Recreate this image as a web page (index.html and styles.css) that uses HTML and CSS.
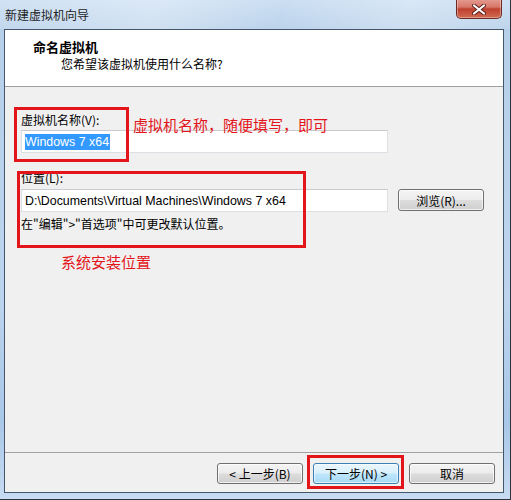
FILE: index.html
```html
<!DOCTYPE html>
<html lang="zh-CN">
<head>
<meta charset="utf-8">
<title>新建虚拟机向导</title>
<link rel="stylesheet" href="styles.css">
</head>
<body>
<div class="window">
  <div class="titlebar">
    <span class="title">新建虚拟机向导</span>
    <div class="close">
      <svg width="14" height="11" viewBox="0 0 14 11">
        <path d="M2 1.5 L12 9.5 M12 1.5 L2 9.5" stroke="#5a2018" stroke-width="4" stroke-linecap="round"/>
        <path d="M2 1.5 L12 9.5 M12 1.5 L2 9.5" stroke="#ffffff" stroke-width="2.2" stroke-linecap="round"/>
      </svg>
    </div>
  </div>
  <div class="client">
    <div class="header">
      <div class="h-title">命名虚拟机</div>
      <div class="h-sub">您希望该虚拟机使用什么名称?</div>
    </div>
    <div class="body">
      <div class="label">虚拟机名称(V):</div>
      <div class="textbox"><span class="sel">Windows 7 x64</span></div>
      <div class="label loc">位置(L):</div>
      <div class="row">
        <div class="textbox">D:\Documents\Virtual Machines\Windows 7 x64</div>
        <button class="btn browse">浏览(R)...</button>
      </div>
      <div class="note">在"编辑"&gt;"首选项"中可更改默认位置。</div>
    </div>
    <div class="footer">
      <button class="btn">&lt; 上一步(B)</button>
      <button class="btn default">下一步(N) &gt;</button>
      <button class="btn">取消</button>
    </div>
  </div>
  <div class="mark box1"></div>
  <div class="mark box2"></div>
  <div class="mark box3"></div>
  <div class="note-red n1">虚拟机名称，随便填写，即可</div>
  <div class="note-red n2">系统安装位置</div>
</div>
</body>
</html>
```
FILE: styles.css
```css
* { box-sizing: border-box; }
html, body { margin: 0; padding: 0; }
body {
  width: 511px;
  height: 500px;
  overflow: hidden;
  font-family: "Noto Sans CJK SC", "Liberation Sans", sans-serif;
  font-size: 12px;
  color: #000;
}
.window {
  position: relative;
  width: 511px;
  height: 500px;
  padding: 29px 6px 6px 4px;
  background: linear-gradient(180deg, #c9ddf2 0px, #b7d0ea 30px, #bcd4ed 300px, #a9c7e8 420px, #c8dcf2 500px);
  border-right: 1px solid #2c3540;
  border-bottom: 1px solid #2c3540;
  display: flex;
  flex-direction: column;
}
.titlebar {
  position: absolute;
  left: 0; top: 0; right: 0;
  height: 29px;
  display: flex;
  align-items: center;
  background: linear-gradient(100deg, rgba(255,255,255,0.15) 0%, rgba(255,255,255,0.35) 30%, rgba(255,255,255,0.05) 55%, rgba(255,255,255,0.3) 80%, rgba(255,255,255,0.1) 100%);
}
.title {
  margin-left: 5px;
  margin-top: -1px;
  font-size: 12px;
  color: #1e1e1e;
}
.close {
  position: absolute;
  left: 456px;
  top: -2px;
  width: 46px;
  height: 21px;
  border: 1px solid #6d2a22;
  border-top: none;
  border-radius: 0 0 5px 5px;
  background: linear-gradient(180deg, #e6a295 0%, #d7776a 45%, #c0402f 55%, #cf6a50 100%);
  box-shadow: inset 0 0 0 1px rgba(255,255,255,0.35);
  display: flex;
  align-items: center;
  justify-content: center;
  padding-top: 2px;
}
.client {
  flex: 1;
  border: 1px solid #44566a;
  background: #f0f0f0;
  display: flex;
  flex-direction: column;
}
.header {
  height: 57px;
  background: #fff;
  border-bottom: 1px solid #a0a0a0;
  padding: 8px 0 0 28px;
}
.h-title {
  font-weight: bold;
  font-size: 13px;
  line-height: 17px;
}
.h-sub {
  padding-left: 28px;
  line-height: 17px;
}
.body {
  flex: 1;
  padding: 25px 0 0 16px;
  border-bottom: 1px solid #a0a0a0;
}
.label {
  line-height: 16px;
  height: 17px;
}
.label.loc { margin-top: 17px; }
.textbox {
  width: 367px;
  height: 23px;
  margin-top: 1px;
  background: #fff;
  border: 1px solid #dcdfe3;
  border-top-color: #c8cbd0;
  padding: 4px 0 0 3px;
  line-height: 15px;
  white-space: nowrap;
  font-family: "Liberation Sans", "Noto Sans CJK SC", sans-serif;
  font-size: 12.4px;
}
.sel {
  background: #3399ff;
  color: #fff;
  padding: 1px 1px 1px 0;
}
.row {
  display: flex;
  align-items: flex-start;
  gap: 10px;
  margin-top: 2px;
}
.row .textbox { margin-top: 0; }
.note {
  margin-top: 4px;
  line-height: 16px;
}
.btn {
  width: 86px;
  height: 21px;
  padding: 0;
  font-family: "Noto Sans CJK SC", "Liberation Sans", sans-serif;
  font-size: 12px;
  color: #000;
  border: 1px solid #707070;
  border-radius: 3px;
  background: linear-gradient(180deg, #f4f4f4 0%, #ececec 48%, #dddddd 52%, #cfcfcf 100%);
  box-shadow: inset 0 0 0 1px rgba(255,255,255,0.7);
  line-height: 19px;
}
.browse { height: 22px; }
.btn.default {
  border-color: #3c7fb1;
  background: linear-gradient(180deg, #eaf6fd 0%, #d9f0fc 48%, #bee6fd 52%, #a7d9f5 100%);
  box-shadow: inset 0 0 0 1px rgba(255,255,255,0.6);
}
.footer {
  height: 39px;
  display: flex;
  justify-content: flex-end;
  gap: 10px;
  padding: 10px 8px 0 0;
}
.mark {
  position: absolute;
  border: 3px solid #e3151b;
}
.box1 { left: 14px; top: 107px; width: 115px; height: 55px; }
.box2 { left: 17px; top: 171px; width: 289px; height: 77px; }
.box3 { left: 307px; top: 455px; width: 97px; height: 34px; }
.note-red {
  position: absolute;
  color: #e3151b;
  font-size: 15px;
  line-height: 18px;
  white-space: nowrap;
}
.n1 { left: 133px; top: 116px; }
.n2 { left: 61px; top: 253px; }
```
